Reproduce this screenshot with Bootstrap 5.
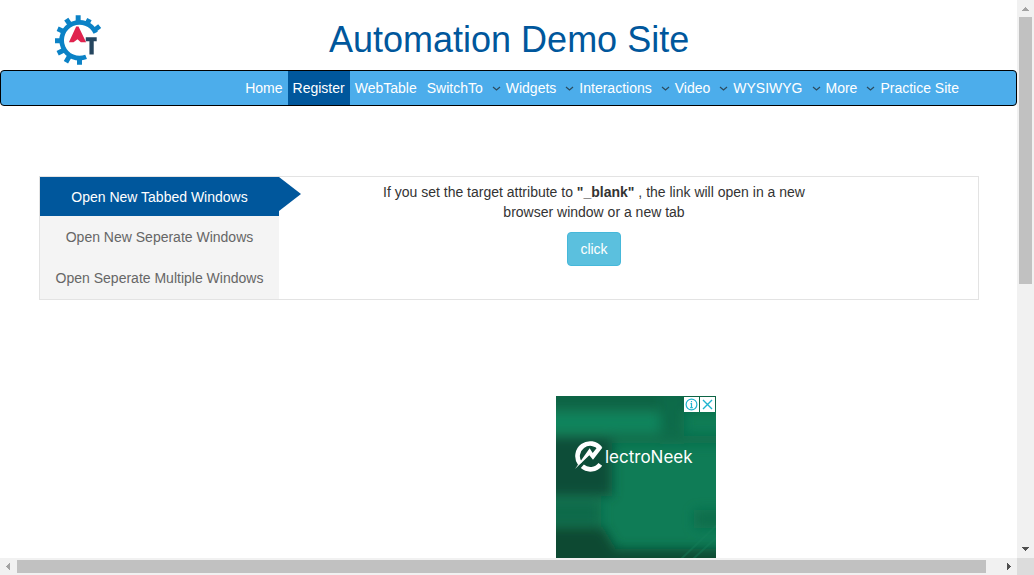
<!DOCTYPE html>
<html lang="en">
<head>
<meta charset="utf-8">
<meta name="viewport" content="width=device-width, initial-scale=1">
<title>Frames &amp; windows</title>
<link href="https://cdn.jsdelivr.net/npm/bootstrap@5.3.0/dist/css/bootstrap.min.css" rel="stylesheet">
<style>
body { font-family: "Liberation Sans", Arial, sans-serif; font-size: 14px; line-height: 20px; color: #333; }
.viewport { display: grid; grid-template: minmax(0, 1fr) 17px / minmax(0, 1fr) 17px; height: 100vh; }
.page-head { height: 70px; padding-top: 14px; padding-left: 55px; gap: 227px; }
.page-head h1 { font-size: 36px; line-height: 40px; font-weight: 400; color: #00579c; margin-top: 6px; }
.main-nav { background: #4cadeb; border: 1px solid #000; border-radius: 4px; height: 36px; padding: 0 52px; }
.main-nav .nav-link { color: #fff; padding: 7px 5px; white-space: nowrap; }
.main-nav .nav-link.active { background: #00579c; }
.main-nav .dropdown .nav-link { padding-right: 0; gap: 8px; }
.tab-panel { margin: 70px 38px 0 39px; border: 1px solid #e3e3e3; }
.side-tabs { width: 239px; background: #f4f4f4; flex: none; height: 122px; }
.side-tabs .nav-link { color: #666; padding: 11px 0 10px; border-radius: 0; width: 100%; text-align: center; }
.side-tabs .nav-link.active { background: #00579c; color: #fff; padding: 10px 0 9px; }
.tab-arrow { width: 22px; height: 34px; left: 100%; top: 0; }
.tab-body { padding: 5px 163px 0 94px; text-align: center; }
.tab-body p { margin-bottom: 10px; }
.btn-click { background: #5bc0de; border: 1px solid #46b8da; color: #fff; font-size: 14px; line-height: 20px; padding: 6px 12px; border-radius: 4px; }
.btn-click:hover { background: #31b0d5; color: #fff; }
.promo { width: 160px; height: 600px; margin: 96px 0 0 556px; background: #0d7450; overflow: hidden; }
.promo-brand { color: #fff; font-family: Inter, sans-serif; font-size: 17px; line-height: 24px; left: 19px; top: 45px; gap: 2px; }
.promo-tools { right: 1px; top: 1px; gap: 1px; }
.promo-tools button { width: 15px; height: 15px; padding: 0; border: 0; background: #fff; display: flex; }
.bar-y, .bar-x { background: #f1f1f1; display: flex; }
.bar-y { flex-direction: column; }
.bar-y button, .bar-x button { border: 0; padding: 0; background: none; width: 17px; height: 17px; display: flex; flex: none; }
.thumb-y { background: #c1c1c1; margin: 0 2px; flex: 267 0 0; }
.rest-y { flex: 257 0 0; }
.thumb-x { background: #c1c1c1; margin: 2px 0; flex: 969 0 0; }
.rest-x { flex: 14 0 0; }
.bar-corner { background: #dcdcdc; }
</style>
</head>
<body>
<div class="viewport">
  <div class="overflow-hidden">
    <header class="page-head d-flex align-items-start">
      <svg width="47" height="52" viewBox="45 42 142 156" role="img" aria-label="AT">
        <g fill="none" stroke="#0b82c6">
          <path stroke-width="14" d="M168 98A54 54 0 1 0 139 171"/>
          <path stroke-width="15" d="M115 45V66M79 57L90 73M53 86L71 94M45 122H64M53 160L71 151M78 187L88 170M119 195V174M149 57L141 73M180 78L163 91"/>
        </g>
        <path fill="#e0234e" d="M87 127L109 79H116L139 127H123L113 118L101 127Z"/>
        <path fill="#25455f" d="M138 112H171V124H162V164H149V124H138Z"/>
      </svg>
      <h1 class="mb-0">Automation Demo Site</h1>
    </header>
    <nav class="main-nav d-flex justify-content-end">
      <ul class="nav flex-nowrap">
        <li><a class="nav-link" href="#">Home</a></li>
        <li><a class="nav-link active" href="#">Register</a></li>
        <li><a class="nav-link" href="#">WebTable</a></li>
        <li class="dropdown"><a class="nav-link d-flex align-items-center" href="#">SwitchTo<svg width="10" height="10" viewBox="0 0 10 10"><path d="M2 4L5.500 7L9 4" fill="none" stroke="#2b4a5e" stroke-width="1.2"/></svg></a></li>
        <li class="dropdown"><a class="nav-link d-flex align-items-center" href="#">Widgets<svg width="10" height="10" viewBox="0 0 10 10"><path d="M2 4L5.500 7L9 4" fill="none" stroke="#2b4a5e" stroke-width="1.2"/></svg></a></li>
        <li class="dropdown"><a class="nav-link d-flex align-items-center" href="#">Interactions<svg width="10" height="10" viewBox="0 0 10 10"><path d="M2 4L5.500 7L9 4" fill="none" stroke="#2b4a5e" stroke-width="1.2"/></svg></a></li>
        <li class="dropdown"><a class="nav-link d-flex align-items-center" href="#">Video<svg width="10" height="10" viewBox="0 0 10 10"><path d="M2 4L5.500 7L9 4" fill="none" stroke="#2b4a5e" stroke-width="1.2"/></svg></a></li>
        <li class="dropdown"><a class="nav-link d-flex align-items-center" href="#">WYSIWYG<svg width="10" height="10" viewBox="0 0 10 10"><path d="M2 4L5.500 7L9 4" fill="none" stroke="#2b4a5e" stroke-width="1.2"/></svg></a></li>
        <li class="dropdown"><a class="nav-link d-flex align-items-center" href="#">More<svg width="10" height="10" viewBox="0 0 10 10"><path d="M2 4L5.500 7L9 4" fill="none" stroke="#2b4a5e" stroke-width="1.2"/></svg></a></li>
        <li><a class="nav-link" href="#">Practice Site</a></li>
      </ul>
    </nav>
    <main>
      <section class="tab-panel d-flex">
        <ul class="side-tabs nav flex-column flex-nowrap">
          <li class="position-relative"><a class="nav-link active" href="#tabbed">Open New Tabbed Windows</a>
            <svg class="tab-arrow position-absolute" viewBox="0 0 22 34"><path fill="#00579c" d="M0 0L22 17L0 34Z"/></svg></li>
          <li><a class="nav-link" href="#separate">Open New Seperate Windows</a></li>
          <li><a class="nav-link" href="#multiple">Open Seperate Multiple Windows</a></li>
        </ul>
        <div class="tab-body flex-grow-1" id="tabbed">
          <p>If you set the target attribute to <b>"_blank"</b> , the link will open in a new browser window or a new tab</p>
          <button type="button" class="btn btn-click">click</button>
        </div>
      </section>
      <aside class="promo position-relative">
        <svg class="d-block" width="160" height="600" viewBox="0 0 160 600" aria-hidden="true">
          <defs><filter id="soft" filterUnits="userSpaceOnUse" x="-40" y="-40" width="240" height="300"><feGaussianBlur stdDeviation="6"/></filter></defs>
          <rect width="160" height="600" fill="#0f7c56"/>
          <g filter="url(#soft)">
            <path fill="#0b6345" d="M-40-40H200V14H-40Z"/>
            <path fill="#11855d" d="M-40 19H105V34H-40Z"/>
            <path fill="#0c6b4a" d="M104-10H128V38H104ZM55 39H200V48H55Z"/>
            <path fill="#0a4e37" d="M-40 41H56V100H-40Z"/>
            <path fill="#0b6948" d="M-40 106H45V127H-40Z"/>
            <path fill="#0c6d4b" d="M138 114H200V132H138Z"/>
            <path fill="#084831" d="M-40 131H47L60 153H200V240H-40Z"/>
          </g>
          <path stroke="#16805b" stroke-width="2" opacity=".4" d="M124 164L162 128M136 164L162 140"/>
        </svg>
        <div class="promo-brand position-absolute d-flex align-items-center">
          <svg width="28" height="31" viewBox="0 0 84 93" aria-hidden="true">
            <path fill="none" stroke="#fff" stroke-width="14" d="M76 23A37 37 0 0 0 15 68M22 76A37 37 0 0 0 76 70"/>
            <path fill="#fff" d="M0 84L44 22L53 36L70 15L82 20L54 56L43 43Z"/>
          </svg>
          <span>lectroNeek</span>
        </div>
        <div class="promo-tools position-absolute d-flex">
          <button type="button" aria-label="About this ad"><svg width="15" height="15" viewBox="0 0 15 15"><circle cx="7.5" cy="7.5" r="5.4" fill="none" stroke="#20b4cf" stroke-width="1.2"/><path d="M7.5 4V5.2M6.5 6.7H7.5V10.5M6.2 10.6H8.8" fill="none" stroke="#20b4cf" stroke-width="1.2"/></svg></button>
          <button type="button" aria-label="Close ad"><svg width="15" height="15" viewBox="0 0 15 15"><path d="M3 3L12 12M12 3L3 12" stroke="#20b4cf" stroke-width="1.4"/></svg></button>
        </div>
      </aside>
    </main>
  </div>
  <div class="bar-y">
    <button type="button" aria-label="Scroll up"><svg width="17" height="17" viewBox="0 0 17 17" shape-rendering="crispEdges"><path fill="#a3a3a3" d="M5 11H12L8.500 7Z"/></svg></button>
    <div class="thumb-y"></div><div class="rest-y"></div>
    <button type="button" aria-label="Scroll down"><svg width="17" height="17" viewBox="0 0 17 17" shape-rendering="crispEdges"><path fill="#505050" d="M5 6H12L8.500 10Z"/></svg></button>
  </div>
  <div class="bar-x">
    <button type="button" aria-label="Scroll left"><svg width="17" height="17" viewBox="0 0 17 17" shape-rendering="crispEdges"><path fill="#a3a3a3" d="M10 5V12L6 8.500Z"/></svg></button>
    <div class="thumb-x"></div><div class="rest-x"></div>
    <button type="button" aria-label="Scroll right"><svg width="17" height="17" viewBox="0 0 17 17" shape-rendering="crispEdges"><path fill="#505050" d="M7 5V12L11 8.500Z"/></svg></button>
  </div>
  <div class="bar-corner"></div>
</div>
<script src="https://cdn.jsdelivr.net/npm/bootstrap@5.3.0/dist/js/bootstrap.bundle.min.js"></script>
</body>
</html>
